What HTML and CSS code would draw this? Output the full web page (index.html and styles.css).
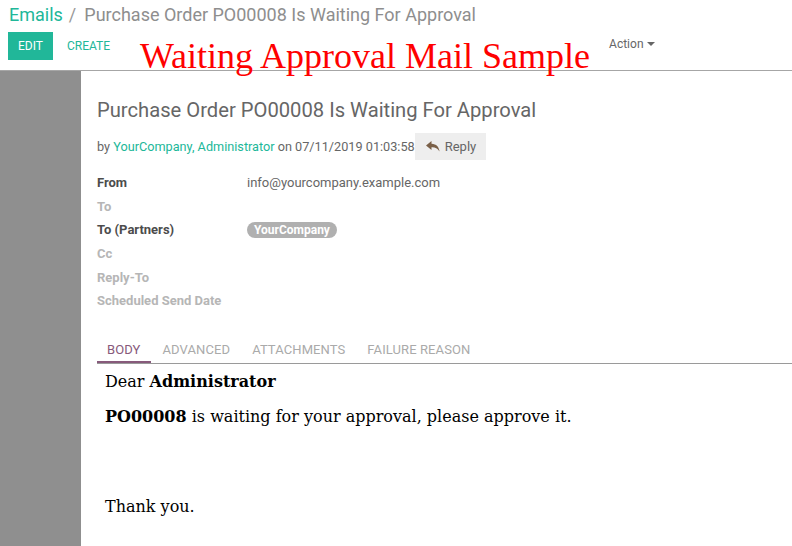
FILE: index.html
```html
<!DOCTYPE html>
<html>
<head>
<meta charset="utf-8">
<link rel="stylesheet" href="styles.css">
</head>
<body>
<div class="control-panel">
  <div class="breadcrumb"><span class="crumb-link">Emails</span><span class="crumb-sep">/</span><span class="crumb-active">Purchase Order PO00008 Is Waiting For Approval</span></div>
  <div class="buttons">
    <button class="btn-edit">EDIT</button>
    <button class="btn-create">CREATE</button>
    <div class="action">Action <span class="caret"></span></div>
  </div>
  <div class="stamp">Waiting Approval Mail Sample</div>
</div>
<div class="layout">
  <div class="sidebar"></div>
  <div class="sheet">
    <h1 class="title">Purchase Order PO00008 Is Waiting For Approval</h1>
    <div class="meta">by <span class="link">YourCompany, Administrator</span> on 07/11/2019 01:03:58<span class="reply"><svg width="14" height="11" viewBox="0 0 14 11"><path d="M5.5 0 L0 4.5 L5.5 9 L5.5 6.2 C9 6 11.5 7.2 13.5 10.5 C13 6 10.5 3 5.5 2.8 Z" fill="#7a6048"/></svg>Reply</span></div>
    <div class="fields">
      <div class="label strong">From</div><div class="value">info@yourcompany.example.com</div>
      <div class="label">To</div><div class="value"></div>
      <div class="label strong">To (Partners)</div><div class="value"><span class="tag">YourCompany</span></div>
      <div class="label">Cc</div><div class="value"></div>
      <div class="label">Reply-To</div><div class="value"></div>
      <div class="label">Scheduled Send Date</div><div class="value"></div>
    </div>
    <div class="tabs">
      <span class="tab active">BODY</span>
      <span class="tab">ADVANCED</span>
      <span class="tab">ATTACHMENTS</span>
      <span class="tab">FAILURE REASON</span>
    </div>
    <div class="mail-body">
      <p>Dear <b>Administrator</b></p>
      <p><b>PO00008</b> is waiting for your approval, please approve it.</p>
      <p class="thanks">Thank you.</p>
    </div>
  </div>
</div>
</body>
</html>
```
FILE: styles.css
```css
* { box-sizing: border-box; }
html, body { margin: 0; padding: 0; background: #fff; height: 100%; overflow: hidden; }
body { font-family: Roboto, "Liberation Sans", sans-serif; color: #4c4c4c; }

.control-panel {
  position: relative;
  height: 71px;
  border-bottom: 1px solid #a6a6a6;
  padding: 4px 0 0 9px;
}
.breadcrumb { font-size: 18px; line-height: 22px; height: 22px; }
.crumb-link { color: #21b799; }
.crumb-sep { color: #999; margin: 0 8px 0 6px; }
.crumb-active { color: #8e8e8e; }

.buttons { display: flex; align-items: flex-start; margin-top: 6px; margin-left: -1px; }
.btn-edit {
  background: #21b799; color: #fff; border: none; font-family: Roboto, sans-serif;
  font-size: 12px; height: 28px; width: 45px; padding: 0; cursor: pointer;
}
.btn-create {
  background: none; border: none; color: #21b799; font-family: Roboto, sans-serif;
  font-size: 12px; height: 28px; padding: 0 0 0 14px; margin-top: 0;
}
.action { margin-left: 499px; font-size: 12px; color: #666; margin-top: 5px; }
.caret {
  display: inline-block; width: 0; height: 0; vertical-align: middle;
  border-left: 4px solid transparent; border-right: 4px solid transparent;
  border-top: 4px solid #666; margin-left: 1px; margin-top: -2px;
}
.stamp {
  position: absolute; left: 140px; top: 36px;
  font-family: "Liberation Serif", serif; font-size: 36px; line-height: 40px; color: #ff0000;
}

.layout { display: flex; height: calc(100% - 71px); }
.sidebar { width: 81px; flex: none; background: #8f8f8f; }
.sheet { flex: 1; padding: 27px 0 0 16px; }

.title { margin: 0; font-weight: 400; font-size: 20.2px; line-height: 24px; color: #666; }
.meta { margin-top: 11px; font-size: 12.7px; color: #666; height: 28px; line-height: 28px; white-space: nowrap; }
.meta .link { color: #21b799; }
.reply {
  display: inline-flex; align-items: center; gap: 5px; vertical-align: top;
  background: #eee; height: 27px; padding: 0 10px 0 11px; margin-left: 0; color: #666;
  font-size: 13px;
}

.fields {
  display: grid; grid-template-columns: 150px 1fr; grid-auto-rows: 23.6px;
  margin-top: 10px; font-size: 13px; align-items: center;
}
.label { font-weight: 700; color: #b6b6b6; }
.label.strong { color: #4c4c4c; }
.value { color: #666; font-size: 13px; }
.tag {
  display: inline-block; background: #b0b0b0; color: #fff; font-weight: 700; font-size: 12px;
  border-radius: 8px; padding: 0 7px; line-height: 16px;
}

.tabs { display: flex; margin-top: 25px; border-bottom: 1px solid #9a9a9a; }
.tab {
  font-size: 13px; color: #aaa; padding: 0 10px; height: 25px; line-height: 23px;
  margin-right: 2px; letter-spacing: 0.1px;
}
.tab.active { color: #875a7b; border-bottom: 2px solid #875a7b; margin-bottom: -1px; }

.mail-body {
  padding: 8px 0 0 8px; font-family: "DejaVu Serif", serif; font-size: 16px; color: #000;
}
.mail-body p { margin: 0 0 16px; line-height: 19px; }
.mail-body p.thanks { margin-top: 71px; }
```
